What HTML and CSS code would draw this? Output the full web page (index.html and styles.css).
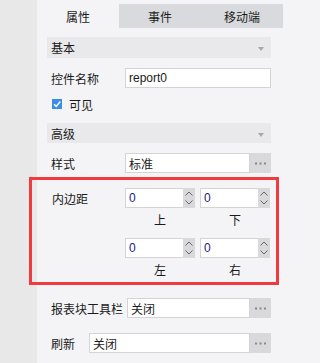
FILE: index.html
```html
<!DOCTYPE html>
<html lang="zh">
<head>
<meta charset="utf-8">
<link rel="stylesheet" href="styles.css">
</head>
<body>
<div class="app">
  <div class="strip"></div>
  <div class="panel">
    <div class="tabs">
      <div class="tab active">属性</div>
      <div class="tab">事件</div>
      <div class="tab">移动端</div>
    </div>
    <div class="content">
      <div class="section">基本<span class="tri"></span></div>
      <div class="row r-name">
        <span class="label l-fixed">控件名称</span>
        <div class="input">report0</div>
      </div>
      <div class="row r-check">
        <span class="check"><svg width="10" height="10" viewBox="0 0 10 10"><path d="M2 5.2 L4.2 7.4 L8.3 2.6" fill="none" stroke="#fff" stroke-width="1.5"/></svg></span>
        <span class="label">可见</span>
      </div>
      <div class="section s-adv">高级<span class="tri"></span></div>
      <div class="row r-style">
        <span class="label l-fixed">样式</span>
        <div class="input">标准</div>
        <div class="more"><svg width="11" height="3" viewBox="0 0 11 3"><rect x="0" y="0.5" width="2" height="2" fill="#8a8a8c"/><rect x="4.5" y="0.5" width="2" height="2" fill="#8a8a8c"/><rect x="9" y="0.5" width="2" height="2" fill="#8a8a8c"/></svg></div>
      </div>
      <div class="padding">
        <span class="label l-pad">内边距</span>
        <div class="grid">
          <div class="cell">
            <div class="spin"><div class="val">0</div><div class="arrows"><svg width="12" height="20" viewBox="0 0 12 20"><path d="M2.5 7.5 L6 4 L9.5 7.5 M2.5 12.5 L6 16 L9.5 12.5" fill="none" stroke="#666" stroke-width="1"/></svg></div></div>
            <div class="cap">上</div>
          </div>
          <div class="cell">
            <div class="spin"><div class="val">0</div><div class="arrows"><svg width="12" height="20" viewBox="0 0 12 20"><path d="M2.5 7.5 L6 4 L9.5 7.5 M2.5 12.5 L6 16 L9.5 12.5" fill="none" stroke="#666" stroke-width="1"/></svg></div></div>
            <div class="cap">下</div>
          </div>
          <div class="cell">
            <div class="spin"><div class="val">0</div><div class="arrows"><svg width="12" height="20" viewBox="0 0 12 20"><path d="M2.5 7.5 L6 4 L9.5 7.5 M2.5 12.5 L6 16 L9.5 12.5" fill="none" stroke="#666" stroke-width="1"/></svg></div></div>
            <div class="cap">左</div>
          </div>
          <div class="cell">
            <div class="spin"><div class="val">0</div><div class="arrows"><svg width="12" height="20" viewBox="0 0 12 20"><path d="M2.5 7.5 L6 4 L9.5 7.5 M2.5 12.5 L6 16 L9.5 12.5" fill="none" stroke="#666" stroke-width="1"/></svg></div></div>
            <div class="cap">右</div>
          </div>
        </div>
      </div>
      <div class="row r-toolbar">
        <span class="label l-tool">报表块工具栏</span>
        <div class="input">关闭</div>
        <div class="more"><svg width="11" height="3" viewBox="0 0 11 3"><rect x="0" y="0.5" width="2" height="2" fill="#8a8a8c"/><rect x="4.5" y="0.5" width="2" height="2" fill="#8a8a8c"/><rect x="9" y="0.5" width="2" height="2" fill="#8a8a8c"/></svg></div>
      </div>
      <div class="row r-refresh">
        <span class="label l-ref">刷新</span>
        <div class="input">关闭</div>
        <div class="more"><svg width="11" height="3" viewBox="0 0 11 3"><rect x="0" y="0.5" width="2" height="2" fill="#8a8a8c"/><rect x="4.5" y="0.5" width="2" height="2" fill="#8a8a8c"/><rect x="9" y="0.5" width="2" height="2" fill="#8a8a8c"/></svg></div>
      </div>
    </div>
  </div>
  <div class="highlight"></div>
</div>
</body>
</html>
```

FILE: styles.css
```css
* { box-sizing: border-box; }
html, body { margin: 0; padding: 0; }
body {
  width: 283px;
  height: 363px;
  overflow: hidden;
  font-family: "Microsoft YaHei", "Noto Sans CJK SC", "Liberation Sans", sans-serif;
  font-size: 12px;
  color: #1a1a1a;
  background: #f4f4f6;
}
.app { position: relative; display: flex; height: 363px; }
.strip { width: 37px; background: #e8e8e8; flex: none; }
.panel { flex: 1; background: #f4f4f6; padding-top: 4px; }
.tabs { display: flex; height: 24px; background: #d9dadd; }
.tab { flex: 1; display: flex; align-items: center; justify-content: center; font-size: 12px; }
.tab.active { background: #f4f4f6; }
.content { padding: 9px 12px 0 10px; }
.section {
  position: relative;
  height: 21px;
  background: #e9e9eb;
  padding-left: 4px;
  display: flex;
  align-items: center;
}
.tri {
  position: absolute;
  right: 7px;
  top: 10px;
  width: 0; height: 0;
  border-left: 3.5px solid transparent;
  border-right: 3.5px solid transparent;
  border-top: 4px solid #a8a8aa;
}
.row { display: flex; align-items: center; height: 20px; padding-left: 4px; }
.label { flex: none; white-space: nowrap; }
.l-fixed { width: 74px; }
.l-tool { width: 76px; }
.l-ref { width: 38px; }
.input {
  flex: 1;
  height: 20px;
  background: #fff;
  border: 1px solid #d4d4d6;
  padding-left: 3px;
  display: flex;
  align-items: center;
  font-family: "Liberation Sans", "Noto Sans CJK SC", sans-serif;
}
.more {
  width: 21px;
  height: 20px;
  background: #d9d9dc;
  display: flex;
  align-items: center;
  justify-content: center;
}
.r-name { margin-top: 10px; }
.r-check { margin-top: 11px; height: 10px; }
.check { width: 10px; height: 10px; background: #3b8ee8; margin-left: 1px; margin-right: 7px; display: flex; }
.s-adv { margin-top: 14px; height: 20px; }
.r-style { margin-top: 10px; }
.padding { display: flex; padding: 11px 0 0 5px; height: 108px; margin-top: 4px; }
.l-pad { width: 73px; margin-top: 2px; }
.grid { display: grid; grid-template-columns: 70px 70px; column-gap: 5px; row-gap: 11px; align-content: start; }
.cell { display: flex; flex-direction: column; }
.spin { display: flex; height: 20px; border: 1px solid #d4d4d6; background: #fff; }
.val { flex: 1; display: flex; align-items: center; padding-left: 3px; font-family: "Liberation Sans", sans-serif; color: #1a1a8a; }
.arrows { width: 12px; background: #d9d9dc; display: flex; margin: -1px -1px -1px 0; height: 20px; }
.cap { text-align: center; height: 14px; line-height: 14px; margin-top: 5px; }
.r-toolbar { margin-top: 13px; }
.r-refresh { margin-top: 15px; }
.highlight {
  position: absolute;
  left: 29px;
  top: 177px;
  width: 250px;
  height: 108px;
  border: 3px solid #ef3a3e;
  pointer-events: none;
}
```
